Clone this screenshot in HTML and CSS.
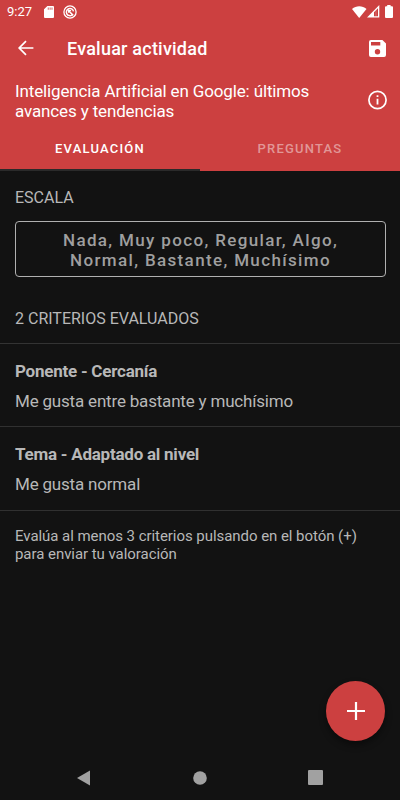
FILE: index.html
```html
<!DOCTYPE html>
<html lang="es">
<head>
    <meta charset="UTF-8">
    <meta name="viewport" content="width=device-width, initial-scale=1.0">
    <title>Evaluar actividad</title>
    <link rel="stylesheet" href="styles.css">
</head>
<body>
    <div class="screen">
        <header class="header">
            <div class="status-bar">
                <span class="clock">9:27</span>
                <svg class="sd-icon" width="10" height="12" viewBox="0 0 10 13" preserveAspectRatio="none">
                    <path fill="#fff" fill-rule="evenodd" d="M3.4 0H9a1 1 0 0 1 1 1v11a1 1 0 0 1-1 1H1a1 1 0 0 1-1-1V3.600zM3.800 1.700v2.400h.8V1.700zM5.700 1.700v2.400h.8V1.700zM7.600 1.700v2.400h.8V1.700z"/>
                </svg>
                <svg class="sync-icon" width="14" height="14" viewBox="0 0 14 14" fill="none" stroke="#fff">
                    <circle cx="7" cy="7" r="6.1" stroke-width="1.3"/>
                    <path stroke-width="1.5" d="M9.1 10A3.6 3.6 0 1 1 10.5 6.3M5.6 5.8l4.6 4.6"/>
                    <path stroke-width="1.2" d="M5.6 7.8V5.6h2.5"/>
                </svg>
                <div class="status-right">
                    <svg width="15" height="12" viewBox="0 0 15 12">
                        <path fill="#fff" d="M0 2.9C4.2-.5 10.3-.5 14.5 2.9L7.2 12z"/>
                    </svg>
                    <svg width="13" height="13" viewBox="0 0 13 13">
                        <path fill="#fff" fill-rule="evenodd" d="M12.3 0v12.500H0zM7 7.300v4h4V3.200z"/>
                        <path fill="#fff" fill-opacity=".35" d="M8.600 6v5.300h.8V5z"/>
                    </svg>
                    <svg class="battery-icon" width="8" height="13" viewBox="0 0 8 13">
                        <path fill="#fff" d="M2.2 0h3.4v1.2H7a1 1 0 0 1 1 1V12a1 1 0 0 1-1 1H1a1 1 0 0 1-1-1V2.200a1 1 0 0 1 1-1h1.200z"/>
                    </svg>
                </div>
            </div>

            <div class="toolbar">
                <svg width="24" height="24" viewBox="0 0 24 24" fill="none" stroke="#fff" stroke-width="1.7">
                    <path d="M19.400 12H5.500M12 5.200L5.200 12l6.800 6.800"/>
                </svg>
                <h1>Evaluar actividad</h1>
                <svg class="save-icon" width="17" height="17" viewBox="0 0 17 17">
                    <path fill="#fff" fill-rule="evenodd" d="M1.900 0H13.400L17 3.600V15.100A1.900 1.900 0 0 1 15.100 17H1.900A1.900 1.900 0 0 1 0 15.100V1.900A1.900 1.900 0 0 1 1.900 0zM2 2v3.600h9.300V2zM8.500 9.100a2.700 2.700 0 1 0 0 5.400 2.700 2.700 0 0 0 0-5.400z"/>
                </svg>
            </div>

            <div class="activity">
                <p>Inteligencia Artificial en Google: últimos avances y tendencias</p>
                <svg class="info-icon" width="20" height="20" viewBox="0 0 20 20">
                    <circle cx="10.500" cy="10" r="8.600" fill="none" stroke="#fff" stroke-width="1.700"/>
                    <path fill="#fff" d="M9.600 5.300h1.800v1.800H9.600zM9.600 8.800h1.800v5.700H9.600z"/>
                </svg>
            </div>

            <nav class="tabs">
                <div class="tab active">EVALUACIÓN</div>
                <div class="tab">PREGUNTAS</div>
            </nav>
        </header>

        <main class="content">
            <h2 class="scale-title">ESCALA</h2>
            <button class="scale-button">Nada, Muy poco, Regular, Algo,<br>Normal, Bastante, Muchísimo</button>
            <h2 class="criteria-title">2 CRITERIOS EVALUADOS</h2>

            <ul class="criteria">
                <li>
                    <h3>Ponente - Cercanía</h3>
                    <p>Me gusta entre bastante y muchísimo</p>
                </li>
                <li>
                    <h3>Tema - Adaptado al nivel</h3>
                    <p>Me gusta normal</p>
                </li>
            </ul>

            <p class="hint">Evalúa al menos 3 criterios pulsando en el botón (+) para enviar tu valoración</p>
        </main>

        <button class="fab" aria-label="Añadir criterio">
            <svg width="18" height="18" viewBox="0 0 18 18">
                <path stroke="#fff" stroke-width="2.200" d="M9 0v18M0 9h18"/>
            </svg>
        </button>

        <footer class="nav-bar">
            <svg width="14" height="16" viewBox="0 0 14 16"><path fill="#a1a1a1" d="M13 .6v14.800L0 8z"/></svg>
            <svg width="14" height="14" viewBox="0 0 14 14"><circle cx="7" cy="7" r="6.800" fill="#a1a1a1"/></svg>
            <svg width="15" height="15" viewBox="0 0 15 15"><rect width="15" height="15" rx="1" fill="#a1a1a1"/></svg>
        </footer>
    </div>
</body>
</html>
```
FILE: styles.css
```css
* {
    box-sizing: border-box;
    margin: 0;
    padding: 0;
}
body {
    font-family: Roboto, "Liberation Sans", sans-serif;
    background: #121212;
    color: #b8b8b8;
}
svg {
    display: block;
    flex-shrink: 0;
}
.screen {
    position: relative;
    display: flex;
    flex-direction: column;
    width: 400px;
    height: 800px;
    overflow: hidden;
}
.header {
    height: 171px;
    background: #cc4040;
    color: #fff;
}
.status-bar {
    display: flex;
    align-items: center;
    height: 23px;
    padding: 0 7px;
}
.clock {
    width: 37px;
    font-size: 13px;
    line-height: 23px;
}
.sync-icon {
    margin-left: 9px;
}
.status-right {
    display: flex;
    align-items: center;
    margin-left: auto;
}
.battery-icon {
    margin-left: 5px;
}
.toolbar {
    display: flex;
    align-items: center;
    height: 50px;
    padding: 0 14px;
}
.toolbar h1 {
    margin-left: 29px;
    font-size: 18px;
    font-weight: 500;
    letter-spacing: 0.22px;
}
.save-icon {
    margin-left: auto;
}
.activity {
    display: flex;
    align-items: center;
    justify-content: space-between;
    height: 56px;
    padding: 0 13px 0 15px;
}
.activity p {
    width: 310px;
    font-size: 17px;
    line-height: 20px;
    letter-spacing: -0.14px;
}
.info-icon {
    margin-bottom: 2px;
}
.tabs {
    display: flex;
    height: 42px;
}
.tab {
    flex: 1;
    padding-top: 11px;
    font-size: 13px;
    font-weight: 500;
    line-height: 18px;
    letter-spacing: 1.2px;
    text-align: center;
    color: #e19797;
}
.tab.active {
    color: #fff;
    border-bottom: 2px solid #2a2a2a;
}
.content {
    flex: 1;
}
.content h2 {
    padding-left: 15px;
    font-size: 16px;
    font-weight: 400;
    line-height: 20px;
}
.scale-title {
    margin-top: 17px;
}
.scale-button {
    display: block;
    width: 371px;
    height: 56px;
    margin: 13px 0 0 15px;
    padding-top: 2px;
    border: 1px solid #b0b0b0;
    border-radius: 4px;
    background: none;
    color: #9f9f9f;
    font-family: inherit;
    font-size: 17px;
    font-weight: 500;
    line-height: 20px;
    letter-spacing: 1.35px;
}
.criteria-title {
    margin-top: 32px;
}
.criteria {
    margin-top: 14px;
    list-style: none;
    border-top: 1px solid #333;
}
.criteria li {
    height: 83.3px;
    padding: 17px 15px 0;
    border-bottom: 1px solid #303030;
}
.criteria h3 {
    font-size: 17px;
    font-weight: 700;
    line-height: 20px;
    letter-spacing: -0.24px;
}
.criteria p {
    margin-top: 10px;
    font-size: 17px;
    line-height: 20px;
    letter-spacing: -0.19px;
}
.hint {
    width: 370px;
    margin: 16px 0 0 15px;
    font-size: 15px;
    line-height: 18px;
    letter-spacing: -0.05px;
}
.fab {
    position: absolute;
    right: 15px;
    bottom: 59px;
    display: flex;
    align-items: center;
    justify-content: center;
    width: 59px;
    height: 60px;
    border: none;
    border-radius: 50%;
    background: #cc4040;
    box-shadow: 0 4px 7px rgba(0, 0, 0, 0.4);
}
.nav-bar {
    display: flex;
    align-items: center;
    justify-content: space-between;
    height: 45px;
    padding: 0 77px;
}
```
